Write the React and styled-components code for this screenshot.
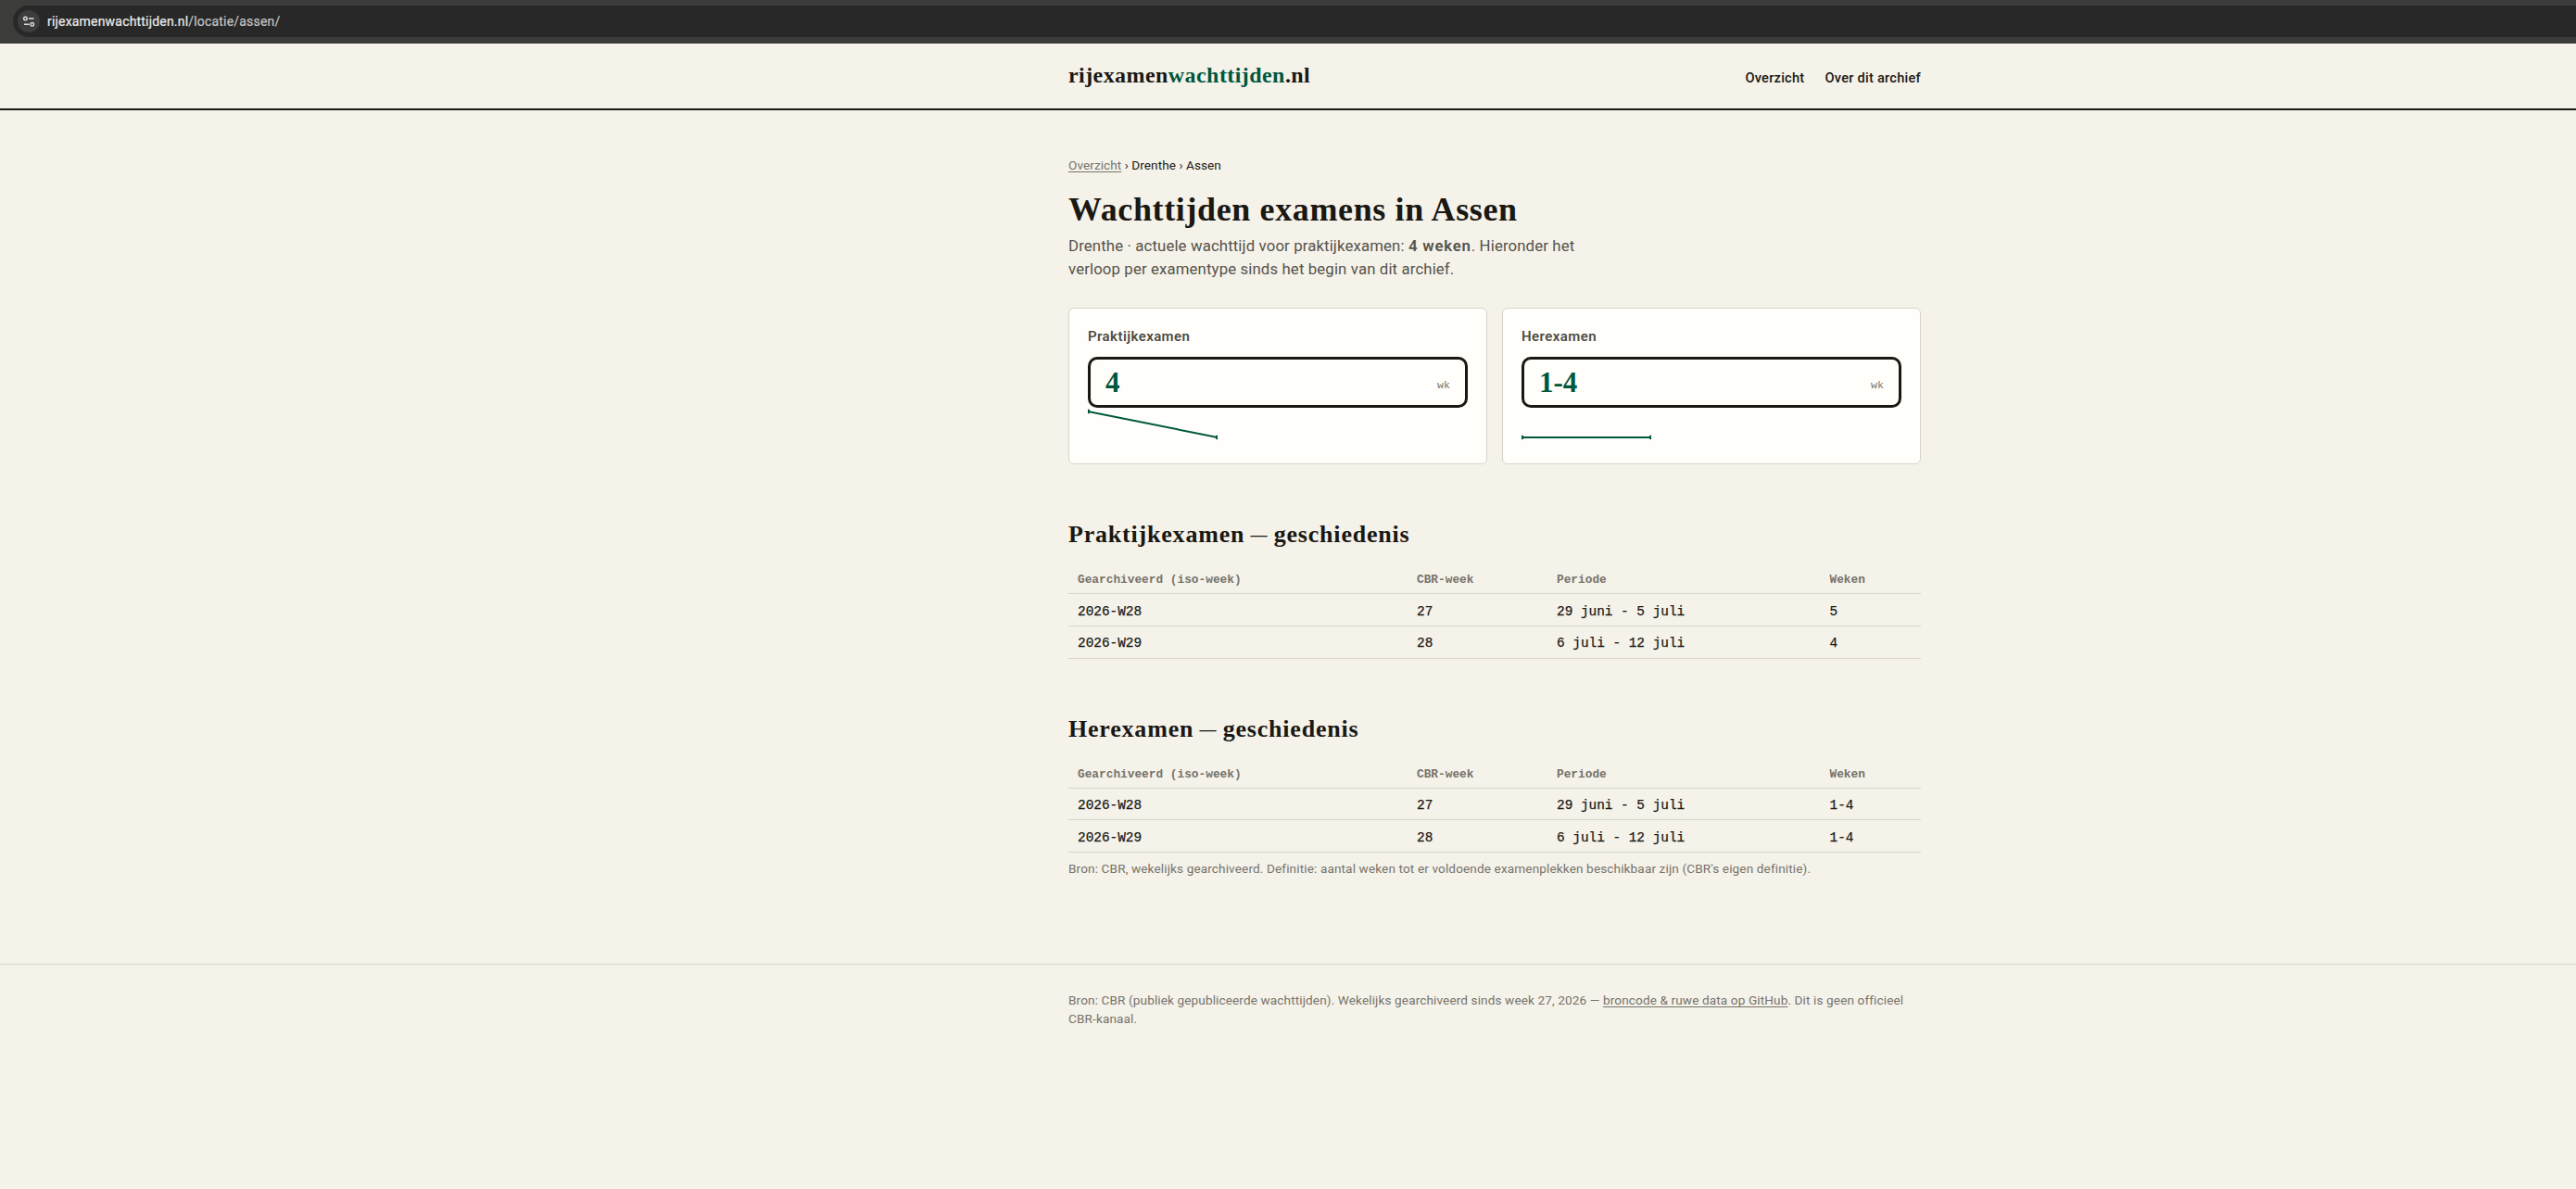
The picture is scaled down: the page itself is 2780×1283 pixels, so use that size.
import React from 'react';
import styled, {createGlobalStyle} from 'styled-components';

const sans = `Roboto, 'Liberation Sans', sans-serif`;
const serif = `'Liberation Serif', serif`;
const mono = `'Liberation Mono', monospace`;

const ink = '#1a1813';
const green = '#00573d';
const muted = '#75736a';
const line = '#d8d5c8';

const GlobalStyle = createGlobalStyle`
    * {
        box-sizing: border-box;
    }

    body {
        margin: 0;
        min-height: 100vh;
        background: #f5f2ea;
        color: ${ink};
        font-family: ${sans};
        overflow: hidden;
    }
`

const BrowserBar = styled.div`
    display: flex;
    height: 47px;
    padding: 6px 0 7px 14px;
    background: #3c3c3b;
`

const AddressField = styled.div`
    display: flex;
    align-items: center;
    flex: 1;
    padding-left: 5px;
    border-radius: 17px 0 0 17px;
    background: #282828;
`

const SiteButton = styled.span`
    display: flex;
    width: 24px;
    height: 24px;
    border-radius: 50%;
    background: #3d3d3d;
`

const Url = styled.span`
    margin-left: 8px;
    color: #c4c4c4;
    font-size: 14px;
    line-height: 20px;
    letter-spacing: 0.19px;
    white-space: nowrap;
    -webkit-text-stroke: 0.2px;

    b {
        color: #ececec;
        font-weight: 400;
    }
`

const Header = styled.header`
    height: 72px;
    padding-top: 19px;
    border-bottom: 2px solid ${ink};
`

const Wrap = styled.div`
    width: 920px;
    margin-left: 1153px;
`

const HeaderRow = styled(Wrap)`
    display: flex;
    justify-content: space-between;
    align-items: baseline;
`

const Logo = styled.a`
    font-family: ${serif};
    font-size: 24px;
    font-weight: 700;
    line-height: 30px;
    letter-spacing: 0.43px;

    span {
        color: ${green};
    }
`

const Nav = styled.nav`
    display: flex;
    gap: 22px;
`

const NavLink = styled.a`
    font-size: 14.6px;
    font-weight: 500;
    line-height: 20px;
    letter-spacing: 0.25px;
`

const Main = styled.main`
    padding-top: 49px;
`

const Crumbs = styled.div`
    font-size: 13.6px;
    line-height: 20px;
    letter-spacing: 0.06px;
    white-space: nowrap;

    a {
        color: ${muted};
        text-decoration: underline;
        text-underline-offset: 2px;
    }
`

const Title = styled.h1`
    margin: 18px 0 7px;
    font-family: ${serif};
    font-size: 36px;
    font-weight: 700;
    line-height: 40px;
    letter-spacing: 0.63px;
`

const Lead = styled.p`
    margin: 0 0 29px;
    color: #55534b;
    font-size: 16.8px;
    line-height: 25px;
    letter-spacing: 0.12px;

    strong {
        font-weight: 600;
        letter-spacing: 0.8px;
    }
`

const Cards = styled.div`
    display: grid;
    grid-template-columns: 1fr 1fr;
    gap: 16px;
    padding-bottom: 0.3px;
`

const Card = styled.section`
    height: 169px;
    padding: 20px;
    border: 1px solid ${line};
    border-radius: 6px;
    background: #fffefa;
`

const CardTitle = styled.h3`
    margin: 0 0 12px;
    color: #4e4c45;
    font-size: 15px;
    font-weight: 600;
    line-height: 20px;
    letter-spacing: 0.42px;
`

const Plate = styled.div`
    display: flex;
    justify-content: space-between;
    align-items: baseline;
    height: 55px;
    padding: 9px 16px 0 16px;
    border: 3px solid ${ink};
    border-radius: 10px;
`

const Weeks = styled.span`
    color: ${green};
    font-family: ${serif};
    font-size: 31px;
    font-weight: 700;
    line-height: 32px;
`

const Unit = styled.span`
    position: relative;
    top: -4px;
    color: ${muted};
    font-family: ${mono};
    font-size: 11.6px;
`

const Spark = styled.svg`
    display: block;
    width: 140px;
    height: 40px;
    overflow: hidden;
`

const SectionTitle = styled.h2`
    height: 32px;
    margin: 59.1px 0 17px;
    font-family: ${serif};
    font-size: 26px;
    font-weight: 700;
    line-height: 34px;
    letter-spacing: 0.8px;
`

const Dash = styled.span`
    position: relative;
    top: -2px;
    margin: 0 -1px;
    font-size: 18px;
    line-height: 1;
`

const Row = styled.div`
    display: grid;
    grid-template-columns: 366px 151px 294.5px 1fr;
    height: ${props => props.$head ? '32px' : '34.6px'};
    padding-top: ${props => props.$head ? '7px' : '8.5px'};
    border-bottom: 1px solid ${line};
    color: ${props => props.$head ? muted : ink};
    font-family: ${mono};
    font-size: ${props => props.$head ? '12.8px' : '14.4px'};
    font-weight: ${props => props.$head ? 700 : 400};
    line-height: 20px;
    -webkit-text-stroke: ${props => props.$head ? '0' : '0.25px'};

    span {
        padding-left: 10px;
    }
`

const Note = styled.p`
    margin: 7px 0 93px;
    color: ${muted};
    font-size: 13.6px;
    line-height: 20px;
    letter-spacing: 0.12px;
    white-space: nowrap;
`

const Footer = styled.footer`
    padding-top: 28.5px;
    border-top: 1px solid ${line};
    color: ${muted};
    font-size: 13.6px;
    line-height: 20px;
    letter-spacing: 0.11px;
    white-space: nowrap;

    a {
        text-decoration: underline;
        text-underline-offset: 2px;
    }
`

const exams = [
    {
        name: 'Praktijkexamen',
        current: '4',
        points: [4, 32],
        history: [
            ['2026-W28', '27', '29 juni - 5 juli', '5'],
            ['2026-W29', '28', '6 juli - 12 juli', '4'],
        ],
    },
    {
        name: 'Herexamen',
        current: '1-4',
        points: [32, 32],
        history: [
            ['2026-W28', '27', '29 juni - 5 juli', '1-4'],
            ['2026-W29', '28', '6 juli - 12 juli', '1-4'],
        ],
    },
]

const columns = ['Gearchiveerd (iso-week)', 'CBR-week', 'Periode', 'Weken'];

const Sparkline = ({points}) => (
    <Spark viewBox="0 0 140 40">
        <line x1="0" y1={points[0]} x2="140" y2={points[1]} stroke={green} strokeWidth="2" />
        <circle cx="0" cy={points[0]} r="2.4" fill={green} />
        <circle cx="140" cy={points[1]} r="2.4" fill={green} />
    </Spark>
)

const History = ({exam}) => (
    <section>
        <SectionTitle>{exam.name} <Dash>—</Dash> geschiedenis</SectionTitle>
        <Row $head>
            {columns.map(name => <span key={name}>{name}</span>)}
        </Row>
        {exam.history.map(row => (
            <Row key={row[0]}>
                {row.map((cell, i) => <span key={i}>{cell}</span>)}
            </Row>
        ))}
    </section>
)

const App = () => (
    <>
        <GlobalStyle />
        <BrowserBar>
            <AddressField>
                <SiteButton>
                    <svg width="24" height="24" viewBox="0 0 24 24" fill="none" stroke="#dedede" strokeWidth="1.4">
                        <circle cx="8.4" cy="9" r="1.8" />
                        <path d="M12 9h5.5M7 15.3h5.5" />
                        <circle cx="15.7" cy="15.3" r="1.8" />
                    </svg>
                </SiteButton>
                <Url><b>rijexamenwachttijden.nl</b>/locatie/assen/</Url>
            </AddressField>
        </BrowserBar>
        <Header>
            <HeaderRow>
                <Logo>rijexamen<span>wachttijden</span>.nl</Logo>
                <Nav>
                    <NavLink>Overzicht</NavLink>
                    <NavLink>Over dit archief</NavLink>
                </Nav>
            </HeaderRow>
        </Header>
        <Main>
            <Wrap>
                <Crumbs><a>Overzicht</a> › Drenthe › Assen</Crumbs>
                <Title>Wachttijden examens in Assen</Title>
                <Lead>
                    Drenthe · actuele wachttijd voor praktijkexamen: <strong>4 weken</strong>. Hieronder het<br />
                    verloop per examentype sinds het begin van dit archief.
                </Lead>
                <Cards>
                    {exams.map(exam => (
                        <Card key={exam.name}>
                            <CardTitle>{exam.name}</CardTitle>
                            <Plate>
                                <Weeks>{exam.current}</Weeks>
                                <Unit>wk</Unit>
                            </Plate>
                            <Sparkline points={exam.points} />
                        </Card>
                    ))}
                </Cards>
                {exams.map(exam => <History key={exam.name} exam={exam} />)}
                <Note>Bron: CBR, wekelijks gearchiveerd. Definitie: aantal weken tot er voldoende examenplekken beschikbaar zijn (CBR's eigen definitie).</Note>
            </Wrap>
        </Main>
        <Footer>
            <Wrap>
                Bron: CBR (publiek gepubliceerde wachttijden). Wekelijks gearchiveerd sinds week 27, 2026 — <a>broncode &amp; ruwe data op GitHub</a>. Dit is geen officieel<br />
                CBR-kanaal.
            </Wrap>
        </Footer>
    </>
);

export default App;
